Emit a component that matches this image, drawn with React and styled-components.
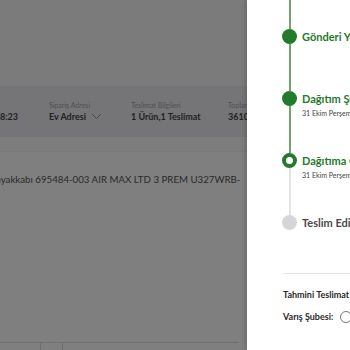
import React from 'react'
import styled, { createGlobalStyle } from 'styled-components'

const GlobalStyle = createGlobalStyle`
  html, body { margin: 0; padding: 0; }
  body {
    overflow: hidden;
    background: #fff;
    font-family: Lato, "Noto Sans", sans-serif;
  }
`

const Screen = styled.div`
  position: relative;
  display: flex;
  width: 350px;
  height: 350px;
  overflow: hidden;
`

const Page = styled.div`
  position: relative;
  flex: 1;
  min-width: 0;
  display: flex;
  flex-direction: column;
  overflow: hidden;
  background: #fff;
`

const Header = styled.div`
  height: 86px;
  background: #f6f6f6;
`

const InfoBar = styled.div`
  height: 51px;
  display: grid;
  grid-template-columns: 108px 82px 97px 80px;
  align-content: center;
  margin-left: -59px;
  background: #eaeaef;
`

const Col = styled.div`
  display: flex;
  flex-direction: column;
  gap: 2px;
  white-space: nowrap;
`

const Label = styled.span`
  font-size: 7px;
  color: #a2a2a6;
`

const Value = styled.span`
  display: flex;
  align-items: center;
  gap: 5px;
  font-size: 9px;
  font-weight: 700;
  color: #454547;
`

const Strip = styled.div`
  height: 14px;
  border-bottom: 1px solid #f2f2f2;
  background: #fafafa;
`

const Product = styled.div`
  padding: 21px 0 0;
  margin-left: -4px;
  font-size: 9.7px;
  color: #555;
  white-space: nowrap;
`

const Filler = styled.div`
  flex: 1;
`

const Cells = styled.div`
  display: grid;
  grid-template-columns: 40px 22px 177px;
  height: 8px;
`

const Cell = styled.div`
  border-top: 1px solid #dedede;
  border-left: ${p => (p.$edge ? '1px solid #dedede' : 'none')};
`

const Overlay = styled.div`
  position: absolute;
  inset: 0;
  background: rgba(0, 0, 0, 0.5);
`

const Drawer = styled.aside`
  position: relative;
  width: 103px;
  flex-shrink: 0;
  display: flex;
  flex-direction: column;
  background: #fff;
  box-shadow: -2px 0 4px rgba(0, 0, 0, 0.15);
  overflow: hidden;
`

const Timeline = styled.div`
  display: flex;
  flex-direction: column;
  padding-left: 35px;
`

const Step = styled.div`
  display: flex;
  gap: 5px;
  height: ${p => p.$h}px;
`

const Rail = styled.div`
  width: 15px;
  display: flex;
  flex-direction: column;
  align-items: center;
  flex-shrink: 0;
`

const Segment = styled.div`
  width: 2px;
  height: ${p => (p.$h ? `${p.$h}px` : 'auto')};
  flex: ${p => (p.$h ? 'none' : 1)};
  background: ${p => p.$c || 'transparent'};
`

const Dot = styled.div`
  box-sizing: border-box;
  width: 15px;
  height: 15px;
  border-radius: 50%;
  flex-shrink: 0;
  background: ${p => (p.$state === 'todo' ? '#d6d6d8' : p.$state === 'now' ? '#fff' : '#237a2c')};
  border: ${p => (p.$state === 'now' ? '4.5px solid #237a2c' : 'none')};
`

const StepText = styled.div`
  padding-top: 29px;
  white-space: nowrap;
`

const Title = styled.div`
  font-size: 11px;
  line-height: 15px;
  font-weight: 700;
  color: ${p => (p.$muted ? '#4a4a4a' : '#237a2c')};
`

const Sub = styled.div`
  margin-top: 2px;
  font-size: 7px;
  line-height: 10px;
  color: #444;
`

const Summary = styled.div`
  margin: 42px 0 0 36px;
  padding-top: 14px;
  border-top: 1px solid #e6e6e6;
  display: flex;
  flex-direction: column;
  gap: 8px;
`

const Line = styled.div`
  display: flex;
  align-items: center;
  gap: 7px;
  font-size: 9px;
  line-height: 14px;
  font-weight: 700;
  color: #2a2a2a;
  white-space: nowrap;
`

const InfoIcon = styled.span`
  box-sizing: border-box;
  width: 12px;
  height: 12px;
  border-radius: 50%;
  border: 1px solid #777;
  flex-shrink: 0;
`

const GREEN = '#6fa46f'
const GRAY = '#e2e2e2'

const steps = [
  { title: 'Gönderi Yola Çıktı', state: 'done', top: GREEN, bottom: GREEN, h: 62 },
  { title: 'Dağıtım Şubesinde', sub: '31 Ekim Perşembe', state: 'done', top: GREEN, bottom: GREEN, h: 62 },
  { title: 'Dağıtıma Çıktı', sub: '31 Ekim Perşembe', state: 'now', top: GREEN, bottom: GRAY, h: 62 },
  { title: 'Teslim Edildi', state: 'todo', top: GRAY, bottom: null, h: 45 },
]

const App = () => (
  <>
    <GlobalStyle />
    <Screen>
      <Page>
        <Header />
        <InfoBar>
          <Col>
            <Label>Sipariş Tarihi</Label>
            <Value>31.10.2024 - 18:23</Value>
          </Col>
          <Col>
            <Label>Sipariş Adresi</Label>
            <Value>
              Ev Adresi
              <svg width="11" height="7" viewBox="0 0 11 7" fill="none">
                <path d="M1 1l4.5 4.5L10 1" stroke="#8a8a8e" strokeWidth="0.9" />
              </svg>
            </Value>
          </Col>
          <Col>
            <Label>Teslimat Bilgileri</Label>
            <Value>1 Ürün,1 Teslimat</Value>
          </Col>
          <Col>
            <Label>Toplam</Label>
            <Value>3610,00 TL</Value>
          </Col>
        </InfoBar>
        <Strip />
        <Product>ayakkabı 695484-003 AIR MAX LTD 3 PREM U327WRB-</Product>
        <Filler />
        <Cells>
          <Cell />
          <Cell $edge />
          <Cell $edge />
        </Cells>
        <Overlay />
      </Page>
      <Drawer>
        <Timeline>
          {steps.map(s => (
            <Step key={s.title} $h={s.h}>
              <Rail>
                <Segment $h={29} $c={s.top} />
                <Dot $state={s.state} />
                <Segment $c={s.bottom} />
              </Rail>
              <StepText>
                <Title $muted={s.state === 'todo'}>{s.title}</Title>
                {s.sub && <Sub>{s.sub}</Sub>}
              </StepText>
            </Step>
          ))}
        </Timeline>
        <Summary>
          <Line>Tahmini Teslimat Tarihi:</Line>
          <Line>
            Varış Şubesi:
            <InfoIcon />
          </Line>
        </Summary>
      </Drawer>
    </Screen>
  </>
)

export default App
